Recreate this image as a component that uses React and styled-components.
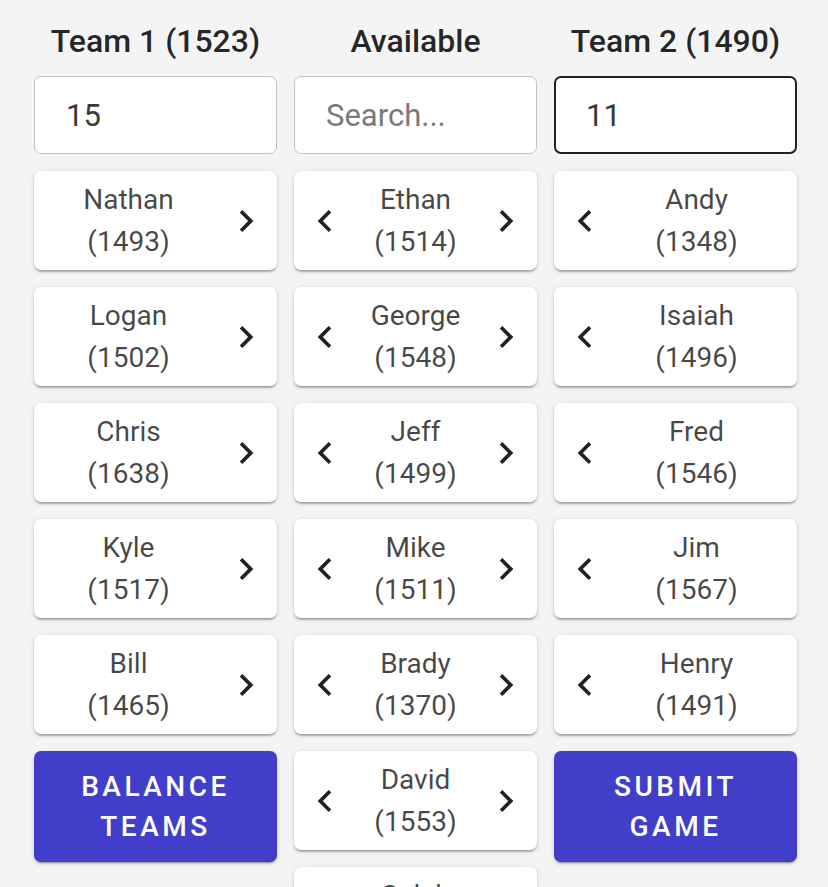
import styled, { createGlobalStyle } from 'styled-components'

const GlobalStyle = createGlobalStyle`
  body {
    margin: 0;
    background: #f4f4f4;
    font-family: Roboto, 'Noto Sans', Arial, sans-serif;
    overflow: hidden;
  }
`

const Page = styled.div`
  display: grid;
  grid-template-columns: repeat(3, 243px);
  column-gap: 17px;
  align-items: start;
  padding: 20px 31px 0 34px;
`

const Column = styled.div`
  display: flex;
  flex-direction: column;
  gap: 17px;
`

const Heading = styled.h2`
  margin: 0 0 -3px;
  font-weight: 500;
  font-size: 32px;
  line-height: 42px;
  text-align: center;
  color: rgba(0, 0, 0, 0.85);
`

const Field = styled.input`
  box-sizing: border-box;
  width: 100%;
  height: 78px;
  padding: 0 ${({ $focused }) => ($focused ? 30 : 31)}px;
  border: ${({ $focused }) => ($focused ? '2px solid #222' : '1px solid #c2c2c2')};
  border-radius: 7px;
  background: #fff;
  font-family: Roboto, sans-serif;
  font-size: 31px;
  color: #3a3a3a;
  outline: none;

  &::placeholder {
    color: #7a7a7a;
    opacity: 1;
  }
`

const Card = styled.div`
  display: flex;
  align-items: center;
  height: 99px;
  padding: 0 8px;
  box-sizing: border-box;
  background: #fff;
  border-radius: 7px;
  box-shadow: 0 3px 2px -1px rgb(0 0 0 / 20%), 0 1px 2px rgb(0 0 0 / 14%),
    0 1px 5px rgb(0 0 0 / 12%);
`

const Arrow = styled.span`
  flex: none;
  width: 46px;
  display: flex;
  justify-content: center;
  align-items: center;
  color: rgba(0, 0, 0, 0.87);
`

const Info = styled.div`
  flex: 1;
  text-align: center;
  font-size: 28px;
  line-height: 42px;
  color: rgba(0, 0, 0, 0.72);
  margin: ${({ $shift }) => $shift || '0'};
`

const Action = styled.button`
  height: 111px;
  padding: 0 30px;
  border: 0;
  border-radius: 7px;
  background: #413fc9;
  color: #fff;
  font-family: Roboto, sans-serif;
  font-weight: 500;
  font-size: 28px;
  line-height: 40px;
  letter-spacing: 3.5px;
  text-transform: uppercase;
  box-shadow: 0 3px 1px -2px rgb(0 0 0 / 20%), 0 2px 2px rgb(0 0 0 / 14%),
    0 1px 5px rgb(0 0 0 / 12%);
`

const Chevron = ({ dir }) => (
  <svg width="44" height="44" viewBox="0 0 24 24" fill="currentColor">
    {dir === 'right' ? (
      <path d="M10 6 8.59 7.41 13.17 12l-4.58 4.59L10 18l6-6z" />
    ) : (
      <path d="M15.41 7.41 14 6l-6 6 6 6 1.41-1.41L10.83 12z" />
    )}
  </svg>
)

const Player = ({ name, rating, left, right, shift }) => (
  <Card>
    {left && (
      <Arrow>
        <Chevron dir="left" />
      </Arrow>
    )}
    <Info $shift={shift}>
      {name}
      <br />({rating})
    </Info>
    {right && (
      <Arrow>
        <Chevron dir="right" />
      </Arrow>
    )}
  </Card>
)

const team1 = [
  ['Nathan', 1493],
  ['Logan', 1502],
  ['Chris', 1638],
  ['Kyle', 1517],
  ['Bill', 1465],
]

const available = [
  ['Ethan', 1514],
  ['George', 1548],
  ['Jeff', 1499],
  ['Mike', 1511],
  ['Brady', 1370],
  ['David', 1553],
  ['Caleb', 1480],
]

const team2 = [
  ['Andy', 1348],
  ['Isaiah', 1496],
  ['Fred', 1546],
  ['Jim', 1567],
  ['Henry', 1491],
]

const App = () => (
  <>
    <GlobalStyle />
    <Page>
      <Column>
        <Heading>Team 1 (1523)</Heading>
        <Field defaultValue="15" />
        {team1.map(([n, r]) => (
          <Player key={n} name={n} rating={r} right shift="0 0 0 -8px" />
        ))}
        <Action>Balance Teams</Action>
      </Column>

      <Column>
        <Heading>Available</Heading>
        <Field placeholder="Search..." />
        {available.map(([n, r]) => (
          <Player key={n} name={n} rating={r} left right />
        ))}
      </Column>

      <Column>
        <Heading>Team 2 (1490)</Heading>
        <Field defaultValue="11" $focused />
        {team2.map(([n, r]) => (
          <Player key={n} name={n} rating={r} left shift="0 4px 0 0" />
        ))}
        <Action>Submit Game</Action>
      </Column>
    </Page>
  </>
)

export default App
